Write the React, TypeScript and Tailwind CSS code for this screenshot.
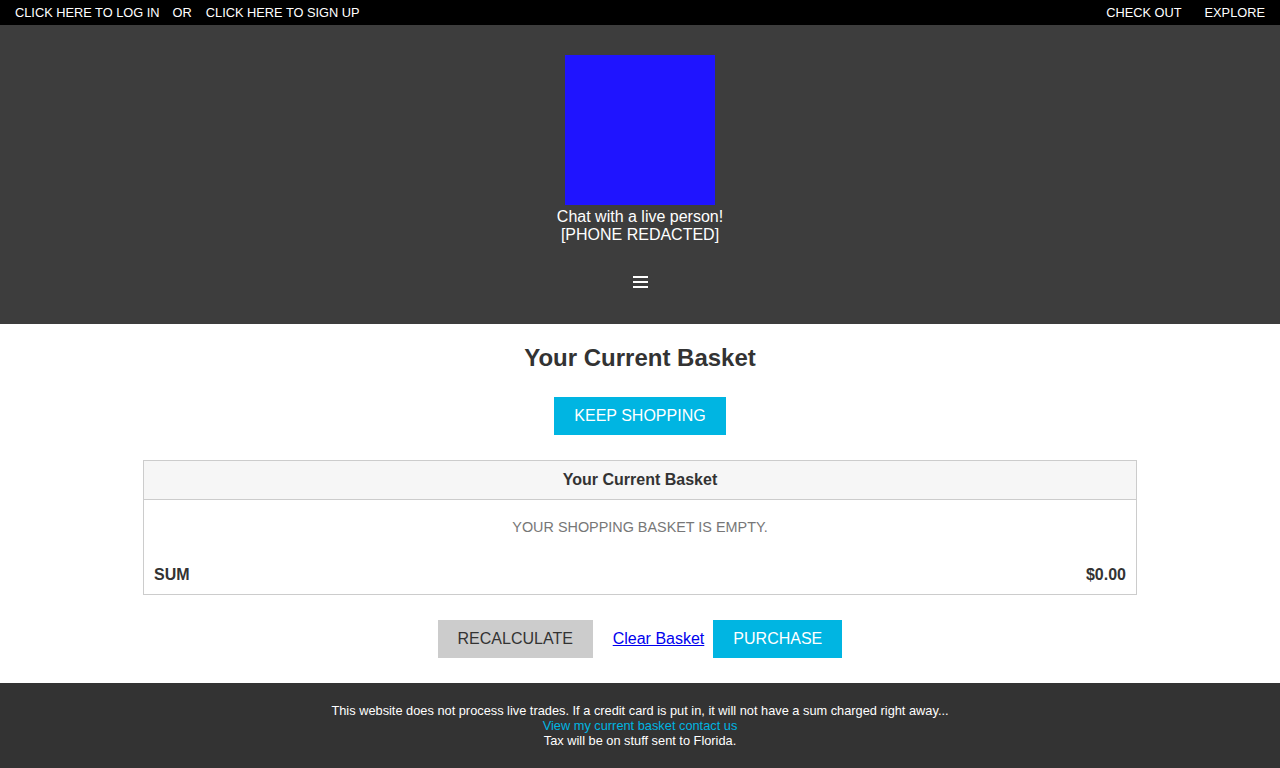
import React from "react";

export default function App() {
  return (
    <div className="min-h-[768px] bg-white flex flex-col" style={{ fontFamily: '"Liberation Sans", Arial, sans-serif' }}>
      <div className="h-[25px] bg-black flex items-center justify-between px-[15px] text-[12.8px] text-white uppercase">
        <div className="flex items-center">
          <span>Click here to log in</span>
          <span className="ml-[13px]">or</span>
          <span className="ml-[14px]">Click here to sign up</span>
        </div>
        <div className="flex items-center">
          <span>Check out</span>
          <span className="ml-[23px]">Explore</span>
        </div>
      </div>

      <div className="h-[299px] bg-[#3d3d3d] flex flex-col items-center pt-[30px]">
        <div className="w-[150px] h-[150px] bg-[#1f14ff]" />
        <div className="text-white text-[16px] leading-[18px] text-center mt-[3px]">
          <div>Chat with a live person!</div>
          <div>[PHONE REDACTED]</div>
        </div>
        <div className="mt-[32px] flex flex-col gap-[3px]">
          <div className="w-[15px] h-[2px] bg-white" />
          <div className="w-[15px] h-[2px] bg-white" />
          <div className="w-[15px] h-[2px] bg-white" />
        </div>
      </div>

      <div className="flex flex-col items-center">
        <h1 className="mt-[20px] text-[24px] leading-[28px] font-bold text-[#333]">Your Current Basket</h1>
        <button className="mt-[25px] w-[172px] h-[38px] bg-[#00b5e2] text-white text-[16px] uppercase">Keep Shopping</button>
        <div className="mt-[25px] w-[994px] border border-[#cccccc]">
          <div className="h-[39px] bg-[#f6f6f6] border-b border-[#cccccc] flex items-center justify-center text-[16px] font-bold text-[#333]">
            Your Current Basket
          </div>
          <div className="h-[55px] flex items-center justify-center text-[14.4px] text-[#777] uppercase">
            Your shopping basket is empty.
          </div>
          <div className="h-[39px] flex items-center justify-between px-[10px] text-[16px] font-bold text-[#333]">
            <span>SUM</span>
            <span>$0.00</span>
          </div>
        </div>
        <div className="mt-[25px] mb-[25px] flex items-center">
          <button className="w-[155px] h-[38px] bg-[#cccccc] text-[#333] text-[16px] uppercase">Recalculate</button>
          <a href="#" className="ml-[20px] text-[16px] text-[#0000ee] underline">Clear Basket</a>
          <button className="ml-[9px] w-[129px] h-[38px] bg-[#00b5e2] text-white text-[16px] uppercase">Purchase</button>
        </div>
      </div>

      <div className="flex-1 bg-[#333333] flex flex-col items-center pt-[20px] pb-[20px] text-[12.8px] leading-[15px] text-white text-center">
        <div>This website does not process live trades. If a credit card is put in, it will not have a sum charged right away...</div>
        <div className="text-[#00b5e2]">View my current basket contact us</div>
        <div>Tax will be on stuff sent to Florida.</div>
      </div>
    </div>
  );
}
